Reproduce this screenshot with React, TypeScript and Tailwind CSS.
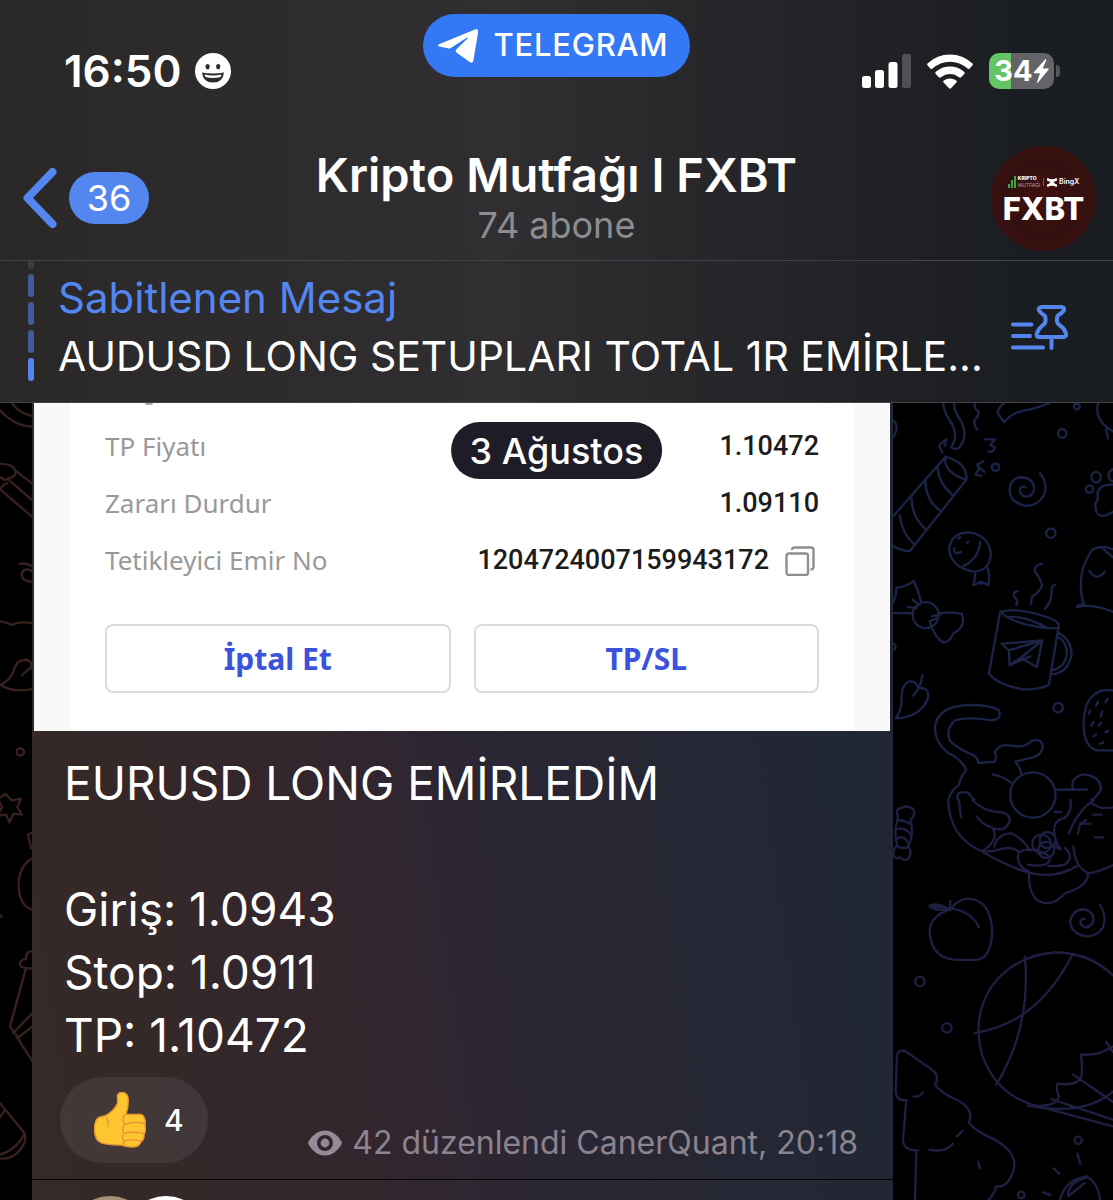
import type { ReactNode } from "react";

const ORDER_ROWS = [
  { label: "TP Fiyatı", value: "1.10472" },
  { label: "Zararı Durdur", value: "1.09110" },
  { label: "Tetikleyici Emir No", value: "1204724007159943172", copyable: true },
];

const MESSAGE_LINES = ["EURUSD LONG EMİRLEDİM", "", "Giriş: 1.0943", "Stop: 1.0911", "TP: 1.10472"];

// ─── Icons ───

function SmileyIcon() {
  return (
    <svg viewBox="0 0 36 36" className="h-9 w-9">
      <circle cx="18" cy="18" r="18" fill="#fff" />
      <ellipse cx="12.6" cy="13.6" rx="2.1" ry="2.7" fill="#2e2b2a" />
      <ellipse cx="23.2" cy="13.6" rx="2.1" ry="2.7" fill="#2e2b2a" />
      <path d="M7 19.5Q18 21.5 29 19.5Q28 29.5 18 29.5Q8 29.5 7 19.5Z" fill="#2e2b2a" />
      <path d="M9.5 21.5Q18 23.300 26.500 21.500L25.500 24Q18 26 10.500 24Z" fill="#fff" />
    </svg>
  );
}

function PlaneIcon() {
  return (
    <svg viewBox="0 0 40 34" className="h-[34px] w-10" fill="#fff">
      <path d="M1 15.200L37.500 0.300Q40.600-0.400 40.200 2.800L35.400 31.500Q34.700 35 31.300 32.800L18.500 23.600Q16.800 22 18.500 20.200L29.500 9.600Q30.300 8 28.300 8.900L13.200 18.800Q11.500 19.800 9.600 19.300L1.300 17.400Q-1 16.300 1 15.200Z" />
    </svg>
  );
}

function SignalIcon() {
  return (
    <svg viewBox="0 0 49 34" className="h-[34px] w-[49px]" fill="#fff">
      <rect x="0" y="22" width="9" height="12" rx="2.500" />
      <rect x="13" y="16" width="9" height="18" rx="2.500" />
      <rect x="26.500" y="8" width="9" height="26" rx="2.500" />
      <rect x="40" y="0" width="9" height="34" rx="2.500" fill="#505156" />
    </svg>
  );
}

function WifiIcon() {
  return (
    <svg viewBox="0 0 46 35" className="h-[35px] w-[46px]" fill="#fff">
      <path d="M0.600 11.500Q-0.400 10.400 0.800 9.300Q10 0.500 23 0.500Q36 0.500 45.200 9.300Q46.400 10.400 45.400 11.500L42.600 14.600Q41.600 15.600 40.500 14.600Q33 7.700 23 7.700Q13 7.700 5.500 14.600Q4.400 15.600 3.400 14.600Z" />
      <path d="M8.700 20Q7.700 18.900 8.900 17.800Q15 12.600 23 12.600Q31 12.600 37.100 17.800Q38.300 18.900 37.300 20L34.200 23.300Q33.200 24.200 32 23.300Q28 19.900 23 19.900Q18 19.900 14 23.300Q12.800 24.200 11.800 23.300Z" />
      <path d="M16.400 28.300Q15.600 27.200 16.800 26.400Q19.600 24.500 23 24.500Q26.400 24.500 29.200 26.400Q30.400 27.200 29.600 28.300L24 34.300Q23 35.200 22 34.300Z" />
    </svg>
  );
}

function BoltIcon() {
  return (
    <svg viewBox="0 0 16 24" className="h-6 w-4" fill="#fff">
      <path d="M12.300 0.300L1 13Q0.300 14.200 1.600 14.200H7L4 23Q3.900 24.200 5 23.500L15.500 10.700Q16.200 9.600 14.900 9.500H9.700L13.200 1.200Q13.400 0 12.300 0.300Z" />
    </svg>
  );
}

function PinListIcon() {
  return (
    <svg
      viewBox="0 0 57 46"
      className="h-[46px] w-[57px]"
      fill="none"
      stroke="#5486f0"
      strokeWidth="4"
      strokeLinecap="round"
      strokeLinejoin="round"
    >
      <path d="M2 19.500H20.500M2 31H19M2 42.500H32" />
      <path d="M40.500 33V43" />
      <path d="M30.500 2H50.500Q54 2.500 52.800 5.500Q51 8 47 10.500Q46 11.500 46 13V16.500Q46.500 19 49 20.500Q54 24 55 29Q55.300 32 52.500 32H28Q25.300 32 25.700 29Q27 24 31.500 20.500Q34 19 34.500 16.500V13Q34.500 11.500 33.500 10.500Q29.500 8 28 5.500Q27 2.500 30.500 2Z" />
    </svg>
  );
}

function CopyIcon() {
  return (
    <svg viewBox="0 0 30 30" className="h-[30px] w-[30px]" fill="none" stroke="#8f8f8f" strokeWidth="2.400" strokeLinejoin="round">
      <rect x="1.500" y="7.500" width="21.500" height="21.500" rx="2.500" />
      <path d="M7 4Q7 1.500 9.500 1.500H26Q28.500 1.500 28.500 4V21Q28.500 23.500 25.500 23.500" />
    </svg>
  );
}

function EyeIcon() {
  return (
    <svg viewBox="0 0 34 26" className="h-[26px] w-[34px]">
      <path
        d="M0.500 11.500Q7 0.500 17 0.500Q27 0.500 33.500 11.500Q34.300 13 33.500 14.500Q27 25.500 17 25.500Q7 25.500 0.500 14.500Q-0.300 13 0.500 11.500Z"
        fill="#938b96"
      />
      <circle cx="17" cy="13" r="6.200" fill="none" stroke="#30242f" strokeWidth="3.600" />
    </svg>
  );
}

function ThumbIcon() {
  return (
    <svg viewBox="0 0 156 168" className="h-14 w-[52px]">
      <path
        d="M70 10Q75-2 90 2Q103 6 103 27Q103 47 96 67H126Q148 64 151 78Q158 90 153 101Q158 116 150 127Q152 142 141 149Q138 165 116 165Q94 166 80 159Q52 160 30 155Q8 152 3 128Q-2 98 8 82Q14 74 32 72Q60 58 71 32Z"
        fill="#fdc52f"
        stroke="#e69335"
        strokeWidth="4"
      />
      <path
        d="M37 76Q46 84 40 104M90 75Q83 72 96 67M152 95Q120 87 93 96Q84 88 89 76M151 125Q115 117 90 124Q80 111 93 96M143 148Q118 140 91 147Q80 136 90 124M91 147Q84 156 94 161"
        fill="none"
        stroke="#e69335"
        strokeWidth="4"
        strokeLinecap="round"
      />
    </svg>
  );
}

// ─── Wallpaper doodles ───

function DoodlesLeft() {
  return (
    <svg
      viewBox="0 403 32 797"
      preserveAspectRatio="xMinYMin slice"
      className="h-full w-full"
      fill="none"
      stroke="#38211e"
      strokeWidth="7"
      strokeLinecap="round"
      strokeLinejoin="round"
    >
      <g transform="translate(0 400) scale(0.333)">
        <path d="M35 8Q55 40 98 48M0 30Q40 78 98 80" />
        <path d="M0 192Q40 192 46 212L98 252M46 212Q50 232 22 236L98 302M0 232Q20 245 22 236M22 250Q4 256 2 270L98 352" />
        <path d="M58 492Q80 488 98 500M98 516Q78 500 66 518Q62 545 98 546" />
        <path d="M0 664Q20 668 36 676Q55 664 98 670" />
        <path d="M98 812Q98 780 74 780Q50 782 42 810Q34 838 2 856Q40 880 98 868M98 798L66 826" />
      </g>
      <g transform="translate(0 730) scale(0.333)">
        <circle cx="61" cy="66" r="11" />
        <path d="M17 192L36 212L62 206L52 232L66 254L40 252L28 277L18 254L-8 258L6 232L-6 206Z" />
        <path d="M98 308L84 314L94 356M98 384Q54 410 56 470Q60 530 98 540" />
        <path d="M98 664Q76 664 78 688Q58 690 60 706Q66 718 98 716M78 716L30 890L58 930M98 850L40 910M98 890L56 922" />
        <path d="M0 555L5 562" />
      </g>
      <g transform="translate(0 1040) scale(0.333)">
        <path d="M50-10L96 62M0 190L72 278Q84 300 60 330Q34 360 0 356M14 212L0 232M72 284Q50 330 0 344" />
      </g>
    </svg>
  );
}

function DoodlesRight() {
  return (
    <svg
      viewBox="893 403 220 797"
      preserveAspectRatio="xMinYMin slice"
      className="h-full w-full"
      fill="none"
      stroke="#1b2346"
      strokeWidth="7"
      strokeLinecap="round"
      strokeLinejoin="round"
    >
      <g transform="translate(885 400) scale(0.333)">
        {/* streamers and party horn */}
        <path d="M174 8Q178 40 200 70Q222 110 198 142Q222 158 236 120Q244 90 226 60Q206 30 208 8" />
        <path d="M270 8Q266 25 282 36Q280 50 268 62Q268 76 276 88" />
        <path d="M162 136L184 118L180 138M162 136L172 158M300 118H330L316 136L330 142Q326 160 310 154M296 184L276 194L284 204L272 224M284 204L298 216M272 224L290 228" />
        <circle cx="332" cy="202" r="11" />
        <path d="M24 350L182 170Q250 190 244 240L74 454Q50 454 24 438M182 170Q172 215 244 240M158 200Q160 250 204 286M122 240Q120 300 166 332M80 296Q80 350 122 388M44 346Q50 400 88 434" />
        <path d="M24 60Q46 80 24 112" />
        <path d="M358 8Q340 24 338 40L358 66Q372 48 400 36Q460 24 496 8" />
        <circle cx="576" cy="20" r="9" />
        <circle cx="532" cy="100" r="13" />
        <path d="M640 8Q626 60 684 94M664 88L670 116" />
        {/* swirl */}
        <path d="M466 220Q490 250 478 284Q460 318 424 318Q374 310 374 268Q378 232 412 232Q446 236 448 266Q444 292 420 290Q402 282 406 266Q412 256 422 262" />
        {/* paw */}
        <circle cx="614" cy="268" r="11" />
        <ellipse cx="634" cy="232" rx="14" ry="16" />
        <path d="M684 208Q668 214 672 234Q676 242 684 244M684 254Q640 252 638 284Q642 300 632 310Q630 346 652 348Q670 346 684 336" />
        <circle cx="498" cy="400" r="14" />
        {/* rattle */}
        <path d="M192 448Q200 396 256 398Q314 408 318 464Q314 510 270 516Q200 506 192 448ZM286 426Q282 476 236 498M272 516L266 556L288 546L310 556Q316 526 308 504M288 546V552M208 446Q206 466 228 456M220 416L226 412M246 428L250 426" />
        {/* steam */}
        <path d="M472 492Q448 494 450 514Q468 540 472 556Q466 576 442 590L438 612M400 574Q384 574 388 590L398 604L394 616M510 556Q498 556 500 584Q500 604 480 628" />
        {/* mug */}
        <path d="M346 636Q400 624 460 644Q520 660 522 676L492 856Q460 872 410 868Q340 856 312 822ZM346 636Q400 684 522 686M370 652Q420 646 490 686M522 700Q560 720 560 764Q552 820 498 824M520 712Q548 730 546 764Q540 804 502 812" />
        <path d="M350 732L472 722L456 802L408 774L374 796L372 752L350 732M372 752L472 722L408 774M374 796L436 770" />
        {/* bow */}
        <path d="M24 610Q36 580 34 564Q60 562 86 544Q100 570 108 604M24 640H84M164 640Q200 636 230 642Q246 680 204 702Q196 726 176 728Q150 716 134 664" />
        <circle cx="122" cy="646" r="39" />
        <path d="M68 622L96 624M84 600L104 616M140 650L166 644M136 664L158 654" />
        <path d="M26 732Q38 740 26 750" />
        {/* heart leaf */}
        <path d="M32 956Q110 952 130 892Q132 860 100 866Q92 840 70 846Q50 856 50 890Q52 930 32 956M112 826Q110 860 84 888" />
        {/* ghost */}
        <path d="M684 448Q650 434 622 450Q586 500 588 560Q590 600 598 614Q580 614 576 622Q620 610 684 636M598 614L590 590M614 514Q636 546 660 516M656 448L684 472" />
        <circle cx="520" cy="924" r="14" />
        {/* strawberry */}
        <path d="M684 872Q630 864 606 914Q590 960 600 1010Q612 1050 640 1052H684M640 906L634 918M668 898L662 908M616 932L612 942M652 936L648 950M626 966L620 978M648 970L642 978M634 1004L626 1010M670 994L662 998M656 1028L646 1032" />
        {/* octopus */}
        <path d="M190 1200Q200 1170 222 1156Q226 1130 244 1112Q232 1080 190 1060Q150 1030 150 980Q160 920 250 916Q320 916 342 932Q352 960 320 962Q250 950 210 962Q180 990 196 1024Q210 1040 250 1060Q280 1070 280 1090L330 1086Q336 1070 330 1060Q340 1030 380 1038Q420 1046 440 1024Q470 1014 474 1040Q472 1066 440 1074L392 1086Q408 1110 410 1124M324 1124Q356 1130 380 1150" />
        <circle cx="444" cy="1186" r="68" />
        <path d="M512 1170H608M564 1166Q556 1130 600 1124Q650 1132 648 1170Q630 1200 620 1200M218 1200Q212 1170 250 1180L268 1200" />
      </g>
      <g transform="translate(885 800) scale(0.333)" stroke="#1e1f42">
        {/* candy */}
        <path d="M38 48Q30 24 50 24Q64 14 84 26Q94 44 76 60Q88 100 70 140Q84 160 68 178Q54 184 46 172Q24 182 26 158Q26 142 38 138Q24 100 38 60ZM38 60Q56 60 76 72M32 90Q56 76 80 106M32 120Q56 96 72 136M38 138Q50 150 70 140" />
        {/* bowl */}
        <path d="M190 0Q192 110 290 154Q360 196 432 218Q510 240 580 196M262 0Q300 36 340 36Q376 38 374 64Q364 94 330 86Q290 74 276 50M324 86Q344 120 292 154M328 140Q340 100 380 100Q420 120 434 152M292 154Q320 156 340 150Q380 136 402 156Q390 200 432 214M402 156Q440 140 480 160Q510 180 480 194Q460 200 430 194M222 0L228 52" />
        <circle cx="470" cy="132" r="28" />
        <circle cx="488" cy="120" r="24" />
        <circle cx="484" cy="150" r="24" />
        <path d="M510 140L528 148M540 144Q570 170 540 194Q520 200 490 198M510 36H530M556 0Q564 30 540 54Q500 60 510 108Q512 130 528 148M628 0Q580 30 552 100M620 10Q650 30 684 22M566 140Q570 200 610 220Q640 216 684 196M432 218Q430 310 490 310Q520 306 540 280Q610 260 610 220M580 100L586 72L604 60M590 70L616 72M626 44H650M630 112H656" />
        {/* peach */}
        <path d="M192 330Q134 350 134 396Q140 480 220 480H270Q320 480 322 390Q316 300 250 296Q216 298 200 326Q260 334 282 382M196 304V330M192 326L134 318Q150 306 192 326M134 318Q150 334 186 330" />
        {/* swirl */}
        <path d="M646 316Q668 350 654 384Q636 410 604 410Q560 402 556 366Q562 330 596 328Q626 332 626 360Q620 384 600 382Q584 374 588 362Q592 354 600 358" />
        {/* ball */}
        <path d="M684 526Q610 456 510 458Q390 466 320 560Q262 650 290 760Q330 880 440 914L684 980M420 470Q440 680 334 856M564 462Q460 670 270 700M684 876Q600 950 430 918" />
        <path d="M440 920Q520 920 522 890Q512 866 518 852Q580 860 590 830Q594 800 588 764Q640 770 684 740M500 898L684 960M564 824L684 906M664 726L684 756" />
        <circle cx="105" cy="545" r="14" />
        <circle cx="186" cy="684" r="14" />
        <circle cx="580" cy="1022" r="11" />
        <circle cx="409" cy="1186" r="10" />
        {/* tree */}
        <path d="M66 902Q30 904 32 870L36 770Q40 744 64 756L144 812Q164 830 150 856Q170 880 210 898Q270 926 252 970Q280 1000 330 1020Q400 1060 386 1110Q370 1166 334 1160Q330 1180 312 1200M64 902L54 1020Q56 1056 100 1052M94 1052L90 1200M134 1050Q180 1060 204 1032M216 1010L232 994M86 890Q104 894 114 878M280 1086L284 1106" />
        {/* lipstick */}
        <path d="M526 1200Q540 1140 606 1130Q640 1150 646 1200M550 1190Q546 1150 606 1134M550 1190L600 1150M506 1106L524 1122M578 1062L586 1092M474 1178L496 1186" />
      </g>
    </svg>
  );
}

// ─── Header ───

function StatusBar() {
  return (
    <div className="grid h-[136px] grid-cols-3 items-start pt-[14px]">
      <div className="mt-[37px] flex h-10 items-center gap-[14px] pl-16">
        <span className="text-[44px] leading-10 font-semibold text-white">16:50</span>
        <SmileyIcon />
      </div>
      <a
        href="#telegram"
        className="flex h-[63px] items-center gap-4 justify-self-center rounded-full bg-[#3478f6] pr-[22px] pl-[15px] text-[31px] font-medium text-white"
      >
        <PlaneIcon />
        <span className="tracking-wide">TELEGRAM</span>
      </a>
      <div className="mt-[37px] flex h-10 items-center justify-end gap-4 pr-[53px]">
        <SignalIcon />
        <WifiIcon />
        <div className="flex items-center gap-0.5">
          <div className="flex h-9 w-[65px] items-center justify-center overflow-hidden rounded-[10px] bg-linear-to-r from-[#65c466] from-34% to-[#636467] to-34%">
            <span className="text-[29px] font-bold text-white">34</span>
            <BoltIcon />
          </div>
          <span className="h-3 w-1 rounded-r-full bg-[#55575a]" />
        </div>
      </div>
    </div>
  );
}

function ChannelAvatar() {
  return (
    <button
      type="button"
      aria-label="Kanal bilgisi"
      className="flex h-[105px] w-[105px] flex-col items-center justify-center rounded-full bg-radial from-[#42100f] via-[#32100f] to-[#441212] pt-1 text-white"
    >
      <span className="flex items-center gap-0.5">
        <svg viewBox="0 0 8 12" className="h-3 w-2" fill="#3fa648">
          <path d="M0 8H2V12H0ZM3 4H5V12H3ZM6 0H8V12H6Z" />
        </svg>
        <span className="text-left text-[5px] leading-[7px]">
          <span className="block font-extrabold">KRIPTO</span>
          <span className="block text-white/60">MUTFAĞI</span>
        </span>
        <span className="mx-px h-2 w-px bg-white/30" />
        <svg viewBox="0 0 10 9" className="h-[9px] w-[10px]" fill="none" stroke="#fff" strokeWidth="2.400">
          <path d="M0 1Q5 4 10 1M0 8Q5 5 10 8M3 3L7 6M7 3L3 6" />
        </svg>
        <span className="text-[7px] leading-3 font-semibold">BingX</span>
      </span>
      <span className="mt-1 text-[31px] leading-8 font-extrabold">FXBT</span>
    </button>
  );
}

function NavBar() {
  return (
    <div className="grid h-[124px] grid-cols-[1fr_auto_1fr] items-center px-[17px]">
      <button type="button" aria-label="Geri, 36 okunmamış" className="flex items-center gap-3 justify-self-start">
        <svg viewBox="-5 0 40 62" className="h-[62px] w-10" fill="none" stroke="#5486f0" strokeWidth="8" strokeLinecap="round" strokeLinejoin="round">
          <path d="M30.500 5L5.500 31L30.500 57" />
        </svg>
        <span className="flex h-[52px] w-20 items-center justify-center rounded-full bg-[#5486f0] text-[36px] text-white">
          36
        </span>
      </button>
      <div className="pb-0.5 text-center">
        <h1 className="text-[47px] leading-14 font-semibold text-white">Kripto Mutfağı I FXBT</h1>
        <p className="text-[36px] leading-11 text-[#8d8c90]">74 abone</p>
      </div>
      <div className="justify-self-end">
        <ChannelAvatar />
      </div>
    </div>
  );
}

function PinnedMessage() {
  return (
    <div className="flex h-[143px] border-y border-[#424346] pr-[45px] pl-7">
      <div className="flex w-1.5 shrink-0 flex-col gap-[5px] overflow-hidden">
        <span className="h-2 rounded-b-full bg-[#3b3c48]" />
        <span className="h-[23px] rounded-full bg-[#415a98]" />
        <span className="h-[23px] rounded-full bg-[#415a98]" />
        <span className="h-[23px] rounded-full bg-[#415a98]" />
        <span className="h-[23px] rounded-full bg-[#5486f0]" />
      </div>
      <div className="min-w-0 flex-1 pt-2 pl-6">
        <p className="text-[42px] leading-[58px] text-[#5486f0]">Sabitlenen Mesaj</p>
        <p className="text-[41px] leading-[58px] whitespace-nowrap text-white">AUDUSD LONG SETUPLARI TOTAL 1R EMİRLE...</p>
      </div>
      <button type="button" aria-label="Sabitlenen mesajlar" className="mt-11 ml-4 self-start">
        <PinListIcon />
      </button>
    </div>
  );
}

// ─── Messages ───

function OutlineButton({ children }: { children: ReactNode }) {
  return (
    <button
      type="button"
      className="h-[69px] flex-1 rounded-lg border-2 border-[#dcdcdc] font-['Noto_Sans',sans-serif] text-[30px] font-bold text-[#3a52dc]"
    >
      {children}
    </button>
  );
}

function OrderCard() {
  return (
    <div className="bg-[#f9f9fa] px-9">
      <div className="bg-white px-[35px] pb-[38px]">
        <div className="ml-10 h-[2px] w-2 rounded-b-full bg-[#aaaaaa]" />
        <dl className="pt-[13px]">
          {ORDER_ROWS.map((row) => (
            <div key={row.label} className="flex h-[57px] items-center justify-between">
              <dt className="font-['Noto_Sans',sans-serif] text-[26px] text-[#999999]">{row.label}</dt>
              <dd className="flex items-center gap-4 font-[Roboto,sans-serif] text-[27px] font-medium text-[#1c1c1c]">
                {row.value}
                {row.copyable && (
                  <button type="button" aria-label="Kopyala" className="mr-1">
                    <CopyIcon />
                  </button>
                )}
              </dd>
            </div>
          ))}
        </dl>
        <div className="mt-[35px] flex gap-[23px]">
          <OutlineButton>İptal Et</OutlineButton>
          <OutlineButton>TP/SL</OutlineButton>
        </div>
      </div>
    </div>
  );
}

function Message() {
  return (
    <article className="pr-[3px] pl-0.5">
      <OrderCard />
      <div className="px-[30px] pt-[21px] text-[46px] leading-[63px] text-white">
        {MESSAGE_LINES.map((line, i) => (
          <p key={i} className="min-h-[63px]">
            {line}
          </p>
        ))}
      </div>
      <div className="flex items-end justify-between pt-[10px] pr-8 pb-4 pl-[26px]">
        <button
          type="button"
          className="flex h-[86px] w-[148px] items-center gap-[18px] rounded-full bg-white/7 pl-[34px] text-[30px] font-medium text-white"
        >
          <ThumbIcon />4
        </button>
        <p className="flex items-center gap-[10px] text-[32px] leading-10 text-[#8b838f]">
          <EyeIcon />
          42 düzenlendi CanerQuant, 20:18
        </p>
      </div>
    </article>
  );
}

export default function App() {
  return (
    <div className="flex h-screen flex-col overflow-hidden bg-black font-[Inter,'Liberation_Sans',sans-serif]">
      <header className="shrink-0 bg-linear-to-r from-[#2a2827] via-[#302e31] via-45% to-[#1a1d21] to-92%">
        <StatusBar />
        <NavBar />
        <PinnedMessage />
      </header>

      <main className="relative flex min-h-0 flex-1">
        <div className="w-8 shrink-0">
          <DoodlesLeft />
        </div>
        <div className="min-w-0 flex-1 overflow-hidden bg-[linear-gradient(82deg,#352a26_0%,#33262d_35%,#2b2633_52%,#242734_78%,#202735_100%)]">
          <Message />
          <div className="flex border-t border-black pt-4 pl-9">
            <span className="h-[84px] w-[84px] rounded-full bg-[#a89078]" />
            <span className="-ml-7 h-[84px] w-[84px] rounded-full bg-white" />
          </div>
        </div>
        <div className="w-[220px] shrink-0">
          <DoodlesRight />
        </div>
        <time
          dateTime="08-03"
          className="absolute top-[19px] left-1/2 flex h-[57px] -translate-x-1/2 items-center rounded-full bg-[#1e1c26] px-[19px] text-[36px] font-medium whitespace-nowrap text-white"
        >
          3 Ağustos
        </time>
      </main>
    </div>
  );
}
